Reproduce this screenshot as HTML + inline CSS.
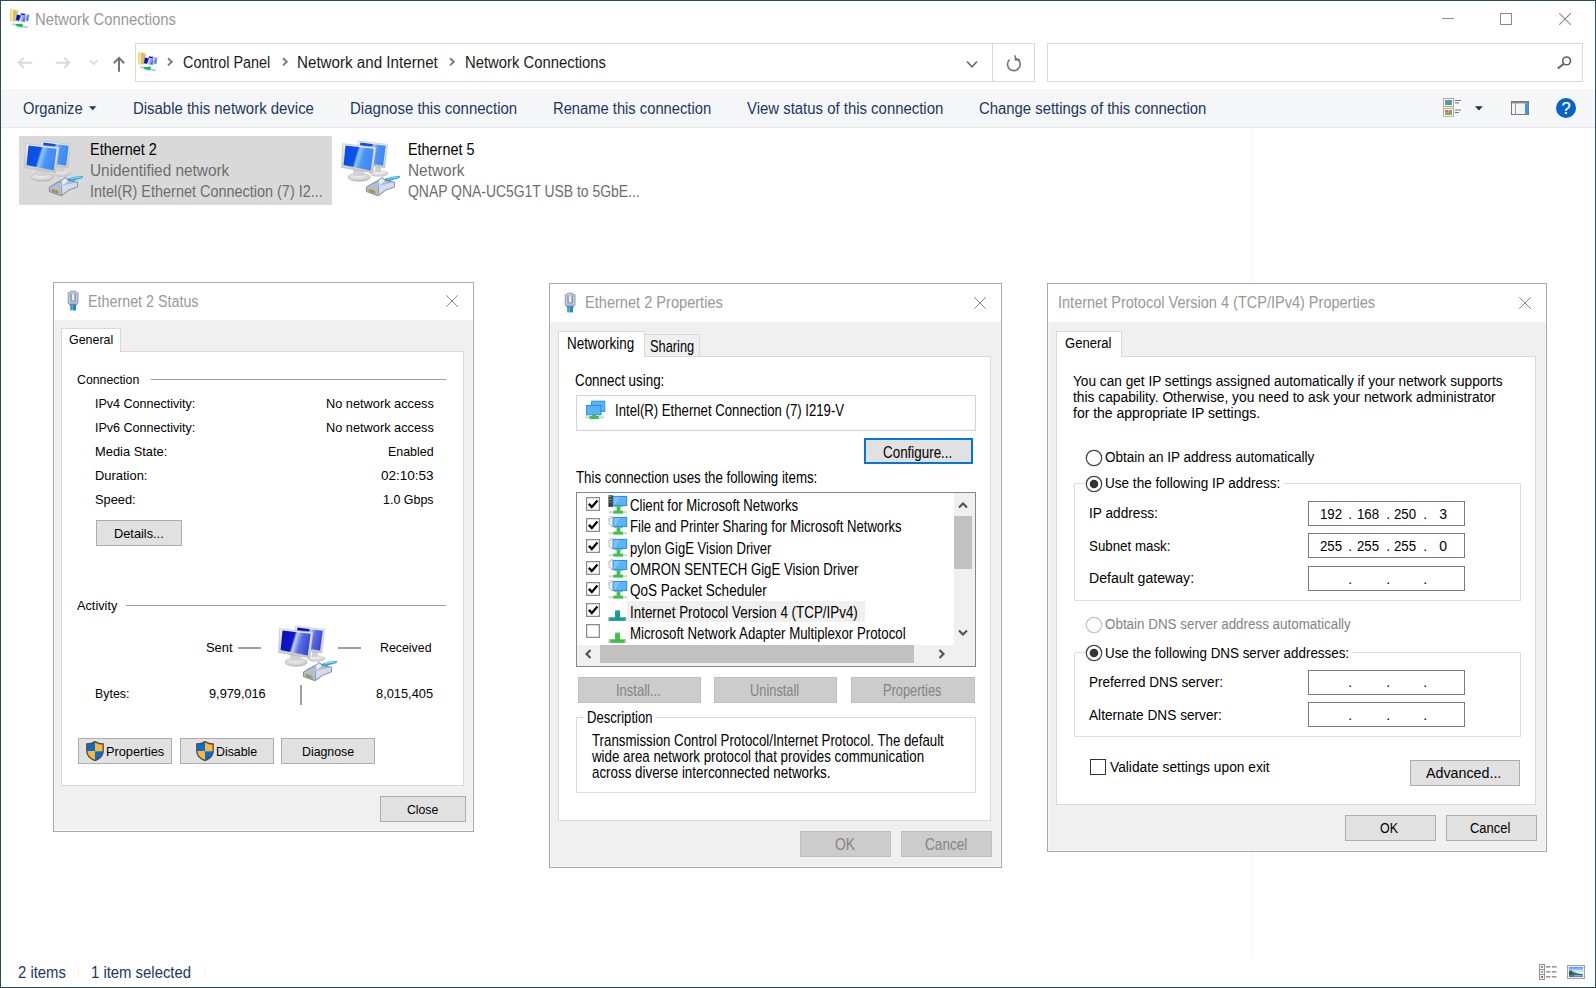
<!DOCTYPE html><html lang="en"><head><meta charset="utf-8"><title>Network Connections</title><style>

html,body{margin:0;padding:0}
body{width:1596px;height:988px;position:relative;overflow:hidden;background:#fff;font-family:"Liberation Sans",sans-serif}
body div,body span,body svg{position:absolute;box-sizing:border-box}
span{white-space:nowrap;transform-origin:0 0;line-height:1}

</style></head><body>
<div style="left:1px;top:89px;width:1594px;height:39px;background:#f5f6f7;border-bottom:1px solid #e9eaeb"></div>
<div style="left:135px;top:43px;width:900px;height:39px;border:1px solid #d9d9d9;background:#fff"></div>
<div style="left:992px;top:44px;width:1px;height:37px;background:#d9d9d9"></div>
<div style="left:1047px;top:43px;width:536px;height:39px;border:1px solid #d9d9d9;background:#fff"></div>
<div style="left:1251px;top:128px;width:1px;height:830px;background:#f5f5f5"></div>
<span style="left:35.20px;top:12.00px;font-size:16px;color:#999;transform:scaleX(0.9265);">Network Connections</span>
<span style="left:182.90px;top:55.00px;font-size:16px;color:#1b1b1b;transform:scaleX(0.8994);">Control Panel</span>
<span style="left:297.40px;top:55.00px;font-size:16px;color:#1b1b1b;transform:scaleX(0.9479);">Network and Internet</span>
<span style="left:465.10px;top:55.00px;font-size:16px;color:#1b1b1b;transform:scaleX(0.9272);">Network Connections</span>
<span style="left:22.70px;top:101.00px;font-size:16px;color:#1d3763;transform:scaleX(0.9180);">Organize</span>
<span style="left:133.00px;top:101.00px;font-size:16px;color:#1d3763;transform:scaleX(0.9331);">Disable this network device</span>
<span style="left:349.70px;top:101.00px;font-size:16px;color:#1d3763;transform:scaleX(0.9352);">Diagnose this connection</span>
<span style="left:552.80px;top:101.00px;font-size:16px;color:#1d3763;transform:scaleX(0.9210);">Rename this connection</span>
<span style="left:746.80px;top:101.00px;font-size:16px;color:#1d3763;transform:scaleX(0.9325);">View status of this connection</span>
<span style="left:978.50px;top:101.00px;font-size:16px;color:#1d3763;transform:scaleX(0.9296);">Change settings of this connection</span>
<div style="left:19px;top:136px;width:313px;height:69px;background:#d9d9d9"></div>
<span style="left:90.00px;top:142.00px;font-size:16px;color:#000;transform:scaleX(0.9062);">Ethernet 2</span>
<span style="left:90.00px;top:163.00px;font-size:16px;color:#6d6d6d;transform:scaleX(0.9609);">Unidentified network</span>
<span style="left:90.00px;top:184.00px;font-size:16px;color:#6d6d6d;transform:scaleX(0.9027);">Intel(R) Ethernet Connection (7) I2...</span>
<span style="left:408.00px;top:142.00px;font-size:16px;color:#000;transform:scaleX(0.8994);">Ethernet 5</span>
<span style="left:408.00px;top:163.00px;font-size:16px;color:#6d6d6d;transform:scaleX(0.9627);">Network</span>
<span style="left:408.00px;top:184.00px;font-size:16px;color:#6d6d6d;transform:scaleX(0.8705);">QNAP QNA-UC5G1T USB to 5GbE...</span>
<span style="left:17.90px;top:965.00px;font-size:16px;color:#1d3763;transform:scaleX(0.9287);">2 items</span>
<span style="left:91.10px;top:965.00px;font-size:16px;color:#1d3763;transform:scaleX(0.9293);">1 item selected</span>
<div style="left:78px;top:966px;width:1px;height:13px;background:#f3f3f3"></div>
<div style="left:204px;top:966px;width:1px;height:13px;background:#f3f3f3"></div>
<svg style="left:8px;top:8px" width="24" height="22" viewBox="0 0 24 22"><defs><linearGradient id="g1" x1="0" y1="0" x2="1" y2="0.3"><stop offset="0" stop-color="#0606b4"/><stop offset="0.5" stop-color="#1014c6"/><stop offset="0.6" stop-color="#dfe5fa"/><stop offset="1" stop-color="#4060dc"/></linearGradient>
<linearGradient id="g2" x1="0" y1="0" x2="1" y2="0"><stop offset="0" stop-color="#ecd27a"/><stop offset="0.3" stop-color="#f7e7a6"/><stop offset="0.5" stop-color="#d9b84e"/><stop offset="1" stop-color="#e6ca6c"/></linearGradient></defs>
<path d="M2 1 L5.4 1.6 L10 2.8 L10 13 L3.2 13.8 L2 13 Z" fill="url(#g2)"/>
<path d="M12.8 5 L21.3 6.6 L20.5 13.2 L12 12 Z" fill="url(#g1)" stroke="#dcdce4" stroke-width="0.6"/>
<path d="M8.4 6.2 L17.4 8.1 L17 14.2 L7.6 12.6 Z" fill="url(#g1)" stroke="#e4e4ea" stroke-width="0.6"/>
<path d="M5 16.2 L19 19.4" stroke="#bcc6c6" stroke-width="1.8" stroke-linecap="round"/>
<path d="M7.9 16 L14.9 15.8 L14.3 19.4 L8.2 18 Z" fill="#0bc656"/>
<path d="M12.5 14 L14 14.2 L13.6 16 L12.4 16 Z" fill="#d8d8dc"/></svg>
<svg style="left:136px;top:51px" width="24" height="22" viewBox="0 0 24 22"><defs><linearGradient id="g3" x1="0" y1="0" x2="1" y2="0.3"><stop offset="0" stop-color="#0606b4"/><stop offset="0.5" stop-color="#1014c6"/><stop offset="0.6" stop-color="#dfe5fa"/><stop offset="1" stop-color="#4060dc"/></linearGradient>
<linearGradient id="g4" x1="0" y1="0" x2="1" y2="0"><stop offset="0" stop-color="#ecd27a"/><stop offset="0.3" stop-color="#f7e7a6"/><stop offset="0.5" stop-color="#d9b84e"/><stop offset="1" stop-color="#e6ca6c"/></linearGradient></defs>
<path d="M2 1 L5.4 1.6 L10 2.8 L10 13 L3.2 13.8 L2 13 Z" fill="url(#g4)"/>
<path d="M12.8 5 L21.3 6.6 L20.5 13.2 L12 12 Z" fill="url(#g3)" stroke="#dcdce4" stroke-width="0.6"/>
<path d="M8.4 6.2 L17.4 8.1 L17 14.2 L7.6 12.6 Z" fill="url(#g3)" stroke="#e4e4ea" stroke-width="0.6"/>
<path d="M5 16.2 L19 19.4" stroke="#bcc6c6" stroke-width="1.8" stroke-linecap="round"/>
<path d="M7.9 16 L14.9 15.8 L14.3 19.4 L8.2 18 Z" fill="#0bc656"/>
<path d="M12.5 14 L14 14.2 L13.6 16 L12.4 16 Z" fill="#d8d8dc"/></svg>
<div style="left:1442px;top:18px;width:12px;height:1px;background:#8a8a8a"></div>
<div style="left:1500px;top:13px;width:12px;height:12px;border:1px solid #8a8a8a"></div>
<svg style="left:1559px;top:13px" width="12" height="12" viewBox="0 0 12 12"><path d="M0.3 0.3 L11.7 11.7 M11.7 0.3 L0.3 11.7" stroke="#8a8a8a" stroke-width="1.1" fill="none"/></svg>
<svg style="left:17px;top:55px" width="16" height="15" viewBox="0 0 16 15"><path d="M15.2 7.7 L1.8 7.7 M6.8 2.6 L1.7 7.7 L6.8 12.8" stroke="#d9d9d9" stroke-width="1.9" fill="none"/></svg>
<svg style="left:55px;top:55px" width="16" height="15" viewBox="0 0 16 15"><path d="M0.8 7.7 L14.2 7.7 M9.2 2.6 L14.3 7.7 L9.2 12.8" stroke="#d9d9d9" stroke-width="1.9" fill="none"/></svg>
<svg style="left:89px;top:59px" width="10" height="7" viewBox="0 0 10 7"><path d="M1 1.4 L4.8 5.2 L8.6 1.4" stroke="#dedede" stroke-width="1.8" fill="none"/></svg>
<svg style="left:112px;top:56px" width="14" height="17" viewBox="0 0 14 17"><path d="M7 15.8 L7 2 M1.8 7.2 L7 1.9 L12.2 7.2" stroke="#747474" stroke-width="2" fill="none"/></svg>
<svg style="left:167.0px;top:57px" width="7" height="10" viewBox="0 0 7 10"><path d="M1 1.2 L4.8 4.8 L1 8.4" stroke="#7a7a7a" stroke-width="1.9" fill="none"/></svg>
<svg style="left:281.5px;top:57px" width="7" height="10" viewBox="0 0 7 10"><path d="M1 1.2 L4.8 4.8 L1 8.4" stroke="#7a7a7a" stroke-width="1.9" fill="none"/></svg>
<svg style="left:448.5px;top:57px" width="7" height="10" viewBox="0 0 7 10"><path d="M1 1.2 L4.8 4.8 L1 8.4" stroke="#7a7a7a" stroke-width="1.9" fill="none"/></svg>
<svg style="left:966px;top:59.5px" width="12" height="9" viewBox="0 0 12 9"><path d="M1 1.5 L6 6.8 L11 1.5" stroke="#6a6a6a" stroke-width="1.7" fill="none"/></svg>
<svg style="left:1006px;top:54.5px" width="16" height="17" viewBox="0 0 16 17"><path d="M9.4 3.2 A6.3 6.3 0 1 1 3.6 4.6" stroke="#757575" stroke-width="1.6" fill="none"/><path d="M9.6 0.2 L9.6 5 L14 5" stroke="#757575" stroke-width="1.5" fill="none" transform="rotate(-8 9.6 5)"/></svg>
<svg style="left:1557px;top:56px" width="15" height="14" viewBox="0 0 15 14"><circle cx="9.6" cy="4.9" r="3.9" stroke="#606060" stroke-width="1.6" fill="none"/><path d="M6.8 7.8 L0.8 12.6" stroke="#606060" stroke-width="1.9"/></svg>
<svg style="left:89px;top:106px" width="8" height="5" viewBox="0 0 8 5"><path d="M0 0.3 L7.4 0.3 L3.7 4.3 Z" fill="#1e395b"/></svg>
<svg style="left:1443px;top:98px" width="19" height="19" viewBox="0 0 19 19"><rect x="0.5" y="0.5" width="10" height="8" fill="#fff" stroke="#a8a8a8"/><rect x="2" y="2" width="7" height="5" fill="#4c96d8"/><path d="M2 6 L5 4 L9 5.6 L9 7 L2 7 Z" fill="#6a9a5c"/>
<rect x="0.5" y="10.3" width="10" height="8" fill="#fff" stroke="#a8a8a8"/><rect x="2" y="11.8" width="7" height="5" fill="#d8c24c"/><rect x="2" y="12" width="3" height="2.5" fill="#e0702c"/><rect x="6" y="12" width="3" height="3" fill="#8a8ae0"/><rect x="2" y="15" width="7" height="1.8" fill="#70b040"/>
<rect x="12" y="2" width="6" height="1" fill="#777"/><rect x="12" y="4.4" width="4" height="1" fill="#777"/><rect x="12" y="11.6" width="6" height="1" fill="#777"/><rect x="12" y="14" width="4" height="1" fill="#777"/></svg>
<svg style="left:1474.5px;top:105.5px" width="8" height="5" viewBox="0 0 8 5"><path d="M0 0.2 L7.8 0.2 L3.9 4.6 Z" fill="#1e2f4f"/></svg>
<svg style="left:1511px;top:101px" width="18" height="14" viewBox="0 0 18 14"><rect x="0.5" y="0.5" width="17" height="13" fill="#f4f4f4" stroke="#7b7b7b"/><rect x="1" y="1" width="16" height="1.4" fill="#8a8a8a"/><rect x="4" y="2" width="1" height="11.5" fill="#9a9a9a"/><rect x="14" y="2.2" width="3" height="11" fill="#3a96e8"/></svg>
<div style="left:1556px;top:98px;width:20px;height:20px;border-radius:50%;background:#0a63c2"></div>
<span style="left:1561.51px;top:100.00px;font-size:16.5px;color:#fff;-webkit-text-stroke:0.2px #fff;transform:scaleX(1.0000);">?</span>
<svg style="left:1539px;top:964px" width="19" height="16" viewBox="0 0 19 16"><rect x="0.55" y="0.55" width="4.9" height="15" fill="#fff" stroke="#929292" stroke-width="1.1"/><rect x="0.5" y="5.1" width="5" height="1" fill="#929292"/><rect x="0.5" y="10.1" width="5" height="1" fill="#929292"/>
<rect x="2.2" y="2.2" width="1.7" height="1.6" fill="#2c6a8c"/><rect x="2.2" y="2" width="1.7" height="0.8" fill="#4a9ae8"/>
<rect x="2.2" y="7.1" width="1.7" height="1.8" fill="#c87838"/><rect x="2.9" y="7" width="1" height="1" fill="#4a8ae0"/>
<rect x="2.2" y="12" width="1.7" height="1.8" fill="#c8201c"/>
<rect x="7" y="2.3" width="4.6" height="1.1" fill="#6c6c6c"/><rect x="13" y="2.3" width="4.6" height="1.1" fill="#6c6c6c"/>
<rect x="7" y="7.3" width="4.6" height="1.1" fill="#6c6c6c"/><rect x="13" y="7.3" width="4.6" height="1.1" fill="#6c6c6c"/>
<rect x="7" y="12.3" width="4.6" height="1.1" fill="#6c6c6c"/><rect x="13" y="12.3" width="4.6" height="1.1" fill="#6c6c6c"/></svg>
<svg style="left:1567px;top:965px" width="18" height="14" viewBox="0 0 18 14"><defs><linearGradient id="g5" x1="0" y1="0" x2="0" y2="1"><stop offset="0" stop-color="#4e90f6"/><stop offset="0.35" stop-color="#b9dcff"/><stop offset="0.6" stop-color="#e2f3ff"/><stop offset="1" stop-color="#dcecf8"/></linearGradient></defs><rect x="0.6" y="0.6" width="16.8" height="12.8" fill="#fff" stroke="#a2a2a2" stroke-width="1.2"/><rect x="2" y="2" width="14" height="10" fill="url(#g5)"/><path d="M2 5.6 L4.4 5.6 L7 7.2 L11 8.4 L16 9.2 L16 10.4 L2 10.4 Z" fill="#3f7052"/><path d="M2 7.5 L4 7.2 L6 9 L2 9.6 Z" fill="#2a5440"/><rect x="2" y="10.2" width="14" height="1.8" fill="#3f74b8"/><rect x="7" y="10.4" width="9" height="0.9" fill="#9fc0e2"/></svg>
<svg style="left:18px;top:134px" width="80" height="70" viewBox="0 0 80 70"><defs>
<linearGradient id="g6" x1="0" y1="0.2" x2="1" y2="0.45"><stop offset="0" stop-color="#0a4ce2"/><stop offset="0.42" stop-color="#0a54ea"/><stop offset="0.5" stop-color="#92c4ff"/><stop offset="0.68" stop-color="#4a94f8"/><stop offset="1" stop-color="#3c88f5"/></linearGradient>
<linearGradient id="g7" x1="0" y1="0" x2="0" y2="1"><stop offset="0" stop-color="#f1f1ef"/><stop offset="1" stop-color="#c6c6c2"/></linearGradient>
<radialGradient id="g8" cx="0.45" cy="0.3" r="0.8"><stop offset="0" stop-color="#f0f0f0"/><stop offset="0.6" stop-color="#d6d6d6"/><stop offset="1" stop-color="#a4a4a4"/></radialGradient>
</defs>
<ellipse cx="44" cy="39.3" rx="9.5" ry="3.3" fill="url(#g8)" opacity="0.9"/>
<path d="M40 32 L46 33 L46 38 L40 38 Z" fill="#d0d0d0"/>
<path d="M23.4 6.9 L52.6 10.4 L49.8 34 L21.6 29.6 Z" fill="url(#g7)" stroke="#bdbdb8" stroke-width="0.6"/>
<path d="M25.4 8.6 L50.8 11.7 L48 31.6 L23.8 27.9 Z" fill="url(#g6)"/>
<ellipse cx="24.2" cy="43.2" rx="11.2" ry="4.1" fill="url(#g8)" stroke="#b4b4b4" stroke-width="0.6"/>
<path d="M17.5 35 L29 37 L28.5 42 L19 42 Z" fill="#d2d2d2"/>
<path d="M7.6 9.7 L40.9 13.3 L37.8 38.9 L6.5 33.5 Z" fill="url(#g7)" stroke="#b9b9b4" stroke-width="0.6"/>
<path d="M10.5 11.5 L38.7 14.7 L35.7 36.4 L8.6 31.1 Z" fill="url(#g6)"/>
<path d="M49.6 44.8 Q57 42.4 64.8 41.8 Q65.6 43 64 44.2 Q57 45.5 51.5 48.2 Z" fill="#2aa7e0"/>
<path d="M53 45 Q58 43.4 63 43" stroke="#9fe0f8" stroke-width="0.9" fill="none" stroke-linecap="round"/>
<path d="M31.4 53 L43.5 46.3 L47.5 43.5 L50.5 46.6 L59.4 48.2 L59.4 53 L51 56 L43.6 61.6 L41 61 L31.4 57.6 Z" fill="#b2bfd3" stroke="#70809c" stroke-width="0.9" stroke-linejoin="round"/>
<path d="M43.2 52 L59 48.6 L59 52.6 L50.8 55.6 L43.6 60.6 Z" fill="#d3dceb"/><path d="M43.4 51.8 L43.6 61.2" stroke="#7a8aa6" stroke-width="0.7"/><path d="M35 50.8 L46.5 44.4 M38.5 49 L48.6 45.6" stroke="#8a9ab4" stroke-width="0.6"/>
<path d="M43.5 46.8 L47.4 44.2 L49.8 47 L45 51 Z" fill="#e6edf6"/>
<path d="M33.3 54.6 L40.8 57 L40.8 60 L33.3 57.4 Z" fill="#b9a84e"/><path d="M35 55.2 L35 58 M36.8 55.8 L36.8 58.6 M38.6 56.4 L38.6 59.2" stroke="#7d7440" stroke-width="0.6"/>
</svg>
<svg style="left:335.4px;top:134px" width="80" height="70" viewBox="0 0 80 70"><defs>
<linearGradient id="g9" x1="0" y1="0.2" x2="1" y2="0.45"><stop offset="0" stop-color="#0a4ce2"/><stop offset="0.42" stop-color="#0a54ea"/><stop offset="0.5" stop-color="#92c4ff"/><stop offset="0.68" stop-color="#4a94f8"/><stop offset="1" stop-color="#3c88f5"/></linearGradient>
<linearGradient id="g10" x1="0" y1="0" x2="0" y2="1"><stop offset="0" stop-color="#f1f1ef"/><stop offset="1" stop-color="#c6c6c2"/></linearGradient>
<radialGradient id="g11" cx="0.45" cy="0.3" r="0.8"><stop offset="0" stop-color="#f0f0f0"/><stop offset="0.6" stop-color="#d6d6d6"/><stop offset="1" stop-color="#a4a4a4"/></radialGradient>
</defs>
<ellipse cx="44" cy="39.3" rx="9.5" ry="3.3" fill="url(#g11)" opacity="0.9"/>
<path d="M40 32 L46 33 L46 38 L40 38 Z" fill="#d0d0d0"/>
<path d="M23.4 6.9 L52.6 10.4 L49.8 34 L21.6 29.6 Z" fill="url(#g10)" stroke="#bdbdb8" stroke-width="0.6"/>
<path d="M25.4 8.6 L50.8 11.7 L48 31.6 L23.8 27.9 Z" fill="url(#g9)"/>
<ellipse cx="24.2" cy="43.2" rx="11.2" ry="4.1" fill="url(#g11)" stroke="#b4b4b4" stroke-width="0.6"/>
<path d="M17.5 35 L29 37 L28.5 42 L19 42 Z" fill="#d2d2d2"/>
<path d="M7.6 9.7 L40.9 13.3 L37.8 38.9 L6.5 33.5 Z" fill="url(#g10)" stroke="#b9b9b4" stroke-width="0.6"/>
<path d="M10.5 11.5 L38.7 14.7 L35.7 36.4 L8.6 31.1 Z" fill="url(#g9)"/>
<path d="M49.6 44.8 Q57 42.4 64.8 41.8 Q65.6 43 64 44.2 Q57 45.5 51.5 48.2 Z" fill="#2aa7e0"/>
<path d="M53 45 Q58 43.4 63 43" stroke="#9fe0f8" stroke-width="0.9" fill="none" stroke-linecap="round"/>
<path d="M31.4 53 L43.5 46.3 L47.5 43.5 L50.5 46.6 L59.4 48.2 L59.4 53 L51 56 L43.6 61.6 L41 61 L31.4 57.6 Z" fill="#b2bfd3" stroke="#70809c" stroke-width="0.9" stroke-linejoin="round"/>
<path d="M43.2 52 L59 48.6 L59 52.6 L50.8 55.6 L43.6 60.6 Z" fill="#d3dceb"/><path d="M43.4 51.8 L43.6 61.2" stroke="#7a8aa6" stroke-width="0.7"/><path d="M35 50.8 L46.5 44.4 M38.5 49 L48.6 45.6" stroke="#8a9ab4" stroke-width="0.6"/>
<path d="M43.5 46.8 L47.4 44.2 L49.8 47 L45 51 Z" fill="#e6edf6"/>
<path d="M33.3 54.6 L40.8 57 L40.8 60 L33.3 57.4 Z" fill="#b9a84e"/><path d="M35 55.2 L35 58 M36.8 55.8 L36.8 58.6 M38.6 56.4 L38.6 59.2" stroke="#7d7440" stroke-width="0.6"/>
</svg>
<div style="left:53px;top:282px;width:421px;height:550px;background:#f0f0f0;border:1px solid #a9a9a9;box-shadow:inset 0 0 0 1px #f6f6f6"></div>
<div style="left:54px;top:283px;width:419px;height:37px;background:#fff"></div>
<svg style="left:67px;top:290.4px" width="12" height="21" viewBox="0 0 12 21"><defs><linearGradient id="g12" x1="0" y1="0" x2="1" y2="0"><stop offset="0" stop-color="#1583ba"/><stop offset="0.4" stop-color="#56bce4"/><stop offset="0.55" stop-color="#1890c8"/><stop offset="1" stop-color="#0f7fb4"/></linearGradient></defs>
<rect x="3.3" y="14.6" width="5.6" height="5.8" fill="url(#g12)"/>
<path d="M1.2 2.8 L2.9 2.8 L3.5 1.2 L8.7 1.2 L9.3 2.8 L11 2.8 L11 13.2 L9.5 14.7 L2.7 14.7 L1.2 13.2 Z" fill="#c3cddd" stroke="#8595ae" stroke-width="0.9" stroke-linejoin="round"/>
<rect x="2.4" y="12.2" width="7.4" height="1.9" fill="#a2b6d3"/>
<path d="M3.9 3.6 L3.9 11 L8.3 11 L8.3 3.6" fill="#adb9cc" stroke="#7787a2" stroke-width="0.9"/>
<rect x="5.1" y="4.2" width="2" height="6.1" fill="#eef1f8"/>
<rect x="2.4" y="14.4" width="7.4" height="0.8" fill="#5e6f8e"/>
</svg>
<span style="left:88.30px;top:294.00px;font-size:16px;color:#999;transform:scaleX(0.8937);">Ethernet 2 Status</span>
<svg style="left:446px;top:295px" width="12" height="12" viewBox="0 0 12 12"><path d="M0.3 0.3 L11.7 11.7 M11.7 0.3 L0.3 11.7" stroke="#858585" stroke-width="1" fill="none"/></svg>
<div style="left:61px;top:351px;width:403px;height:435px;background:#fff;border:1px solid #d9d9d9"></div>
<div style="left:61px;top:328px;width:60px;height:24px;background:#fff;border:1px solid #d9d9d9;border-bottom:none"></div>
<span style="left:68.80px;top:333.00px;font-size:13.5px;color:#000;transform:scaleX(0.9223);">General</span>
<span style="left:77.00px;top:373.00px;font-size:13.5px;color:#000;transform:scaleX(0.9120);">Connection</span>
<div style="left:151px;top:379px;width:295px;height:1px;background:#a0a0a0"></div>
<span style="left:94.80px;top:397.00px;font-size:13.5px;color:#000;transform:scaleX(0.9283);">IPv4 Connectivity:</span>
<span style="left:325.60px;top:397.00px;font-size:13.5px;color:#000;transform:scaleX(0.9452);">No network access</span>
<span style="left:94.80px;top:421.00px;font-size:13.5px;color:#000;transform:scaleX(0.9283);">IPv6 Connectivity:</span>
<span style="left:325.60px;top:421.00px;font-size:13.5px;color:#000;transform:scaleX(0.9452);">No network access</span>
<span style="left:94.80px;top:445.00px;font-size:13.5px;color:#000;transform:scaleX(0.9539);">Media State:</span>
<span style="left:387.80px;top:445.00px;font-size:13.5px;color:#000;transform:scaleX(0.9203);">Enabled</span>
<span style="left:94.80px;top:469.00px;font-size:13.5px;color:#000;transform:scaleX(0.9565);">Duration:</span>
<span style="left:380.80px;top:469.00px;font-size:13.5px;color:#000;transform:scaleX(1.0007);">02:10:53</span>
<span style="left:94.80px;top:493.00px;font-size:13.5px;color:#000;transform:scaleX(0.9510);">Speed:</span>
<span style="left:382.80px;top:493.00px;font-size:13.5px;color:#000;transform:scaleX(0.9234);">1.0 Gbps</span>
<div style="left:96px;top:520px;width:86px;height:26px;background:#e1e1e1;border:1px solid #adadad"></div>
<span style="left:113.70px;top:527.00px;font-size:13.5px;color:#000;transform:scaleX(0.9461);">Details...</span>
<span style="left:76.70px;top:599.00px;font-size:13.5px;color:#000;transform:scaleX(0.9423);">Activity</span>
<div style="left:126px;top:605px;width:320px;height:1px;background:#a0a0a0"></div>
<span style="left:205.80px;top:641.00px;font-size:13.5px;color:#000;transform:scaleX(0.9575);">Sent</span>
<div style="left:238px;top:647px;width:23px;height:1px;background:#999"></div>
<div style="left:238px;top:647px;width:23px;height:2px;background:#a0a0a0"></div>
<div style="left:338px;top:647px;width:23px;height:2px;background:#a0a0a0"></div>
<span style="left:379.90px;top:641.00px;font-size:13.5px;color:#000;transform:scaleX(0.9150);">Received</span>
<svg style="left:271.6px;top:618.8px" width="80" height="70" viewBox="0 0 80 70"><defs>
<linearGradient id="g13" x1="0" y1="0.2" x2="1" y2="0.45"><stop offset="0" stop-color="#0a10c0"/><stop offset="0.42" stop-color="#0c18c8"/><stop offset="0.5" stop-color="#c4d0fa"/><stop offset="0.68" stop-color="#5a70e4"/><stop offset="1" stop-color="#3346d6"/></linearGradient>
<linearGradient id="g14" x1="0" y1="0" x2="0" y2="1"><stop offset="0" stop-color="#f1f1ef"/><stop offset="1" stop-color="#c6c6c2"/></linearGradient>
<radialGradient id="g15" cx="0.45" cy="0.3" r="0.8"><stop offset="0" stop-color="#f0f0f0"/><stop offset="0.6" stop-color="#d6d6d6"/><stop offset="1" stop-color="#a4a4a4"/></radialGradient>
</defs>
<ellipse cx="44" cy="39.3" rx="9.5" ry="3.3" fill="url(#g15)" opacity="0.9"/>
<path d="M40 32 L46 33 L46 38 L40 38 Z" fill="#d0d0d0"/>
<path d="M23.4 6.9 L52.6 10.4 L49.8 34 L21.6 29.6 Z" fill="url(#g14)" stroke="#bdbdb8" stroke-width="0.6"/>
<path d="M25.4 8.6 L50.8 11.7 L48 31.6 L23.8 27.9 Z" fill="url(#g13)"/>
<ellipse cx="24.2" cy="43.2" rx="11.2" ry="4.1" fill="url(#g15)" stroke="#b4b4b4" stroke-width="0.6"/>
<path d="M17.5 35 L29 37 L28.5 42 L19 42 Z" fill="#d2d2d2"/>
<path d="M7.6 9.7 L40.9 13.3 L37.8 38.9 L6.5 33.5 Z" fill="url(#g14)" stroke="#b9b9b4" stroke-width="0.6"/>
<path d="M10.5 11.5 L38.7 14.7 L35.7 36.4 L8.6 31.1 Z" fill="url(#g13)"/>
<path d="M49.6 44.8 Q57 42.4 64.8 41.8 Q65.6 43 64 44.2 Q57 45.5 51.5 48.2 Z" fill="#2aa7e0"/>
<path d="M53 45 Q58 43.4 63 43" stroke="#9fe0f8" stroke-width="0.9" fill="none" stroke-linecap="round"/>
<path d="M31.4 53 L43.5 46.3 L47.5 43.5 L50.5 46.6 L59.4 48.2 L59.4 53 L51 56 L43.6 61.6 L41 61 L31.4 57.6 Z" fill="#b2bfd3" stroke="#70809c" stroke-width="0.9" stroke-linejoin="round"/>
<path d="M43.2 52 L59 48.6 L59 52.6 L50.8 55.6 L43.6 60.6 Z" fill="#d3dceb"/><path d="M43.4 51.8 L43.6 61.2" stroke="#7a8aa6" stroke-width="0.7"/><path d="M35 50.8 L46.5 44.4 M38.5 49 L48.6 45.6" stroke="#8a9ab4" stroke-width="0.6"/>
<path d="M43.5 46.8 L47.4 44.2 L49.8 47 L45 51 Z" fill="#e6edf6"/>
<path d="M33.3 54.6 L40.8 57 L40.8 60 L33.3 57.4 Z" fill="#b9a84e"/><path d="M35 55.2 L35 58 M36.8 55.8 L36.8 58.6 M38.6 56.4 L38.6 59.2" stroke="#7d7440" stroke-width="0.6"/>
</svg>
<span style="left:94.60px;top:687.00px;font-size:13.5px;color:#000;transform:scaleX(0.9170);">Bytes:</span>
<span style="left:208.80px;top:687.00px;font-size:13.5px;color:#000;transform:scaleX(0.9440);">9,979,016</span>
<div style="left:300px;top:685px;width:2px;height:20px;background:#a0a0a0"></div>
<span style="left:376.00px;top:687.00px;font-size:13.5px;color:#000;transform:scaleX(0.9507);">8,015,405</span>
<div style="left:78px;top:738px;width:94px;height:26px;background:#e1e1e1;border:1px solid #adadad"></div>
<svg style="left:85.5px;top:740.5px" width="18" height="20.4" viewBox="0 0 18 20.4"><path d="M9 0.6 C7 2 4 3 0.8 3 L0.8 10.2 L9 10.2 Z" fill="#0b6bd0"/>
<path d="M9 0.6 C11 2 14 3 17.2 3 L17.2 10.2 L9 10.2 Z" fill="#fdb92e"/>
<path d="M0.8 10.2 C0.9 14.5 4.5 17.8 9 19.7 L9 10.2 Z" fill="#fdb92e"/>
<path d="M17.2 10.2 C17.1 14.5 13.5 17.8 9 19.7 L9 10.2 Z" fill="#0b6bd0"/>
<path d="M9 0.6 C7 2 4 3 0.8 3 L0.8 10.2 C0.9 14.5 4.5 17.8 9 19.7 C13.5 17.8 17.1 14.5 17.2 10.2 L17.2 3 C14 3 11 2 9 0.6 Z" fill="none" stroke="#4c4c4c" stroke-width="1.3"/></svg>
<span style="left:106.10px;top:745.00px;font-size:13.5px;color:#000;transform:scaleX(0.9459);">Properties</span>
<div style="left:180px;top:738px;width:94px;height:26px;background:#e1e1e1;border:1px solid #adadad"></div>
<svg style="left:195.6px;top:740.5px" width="18" height="20.4" viewBox="0 0 18 20.4"><path d="M9 0.6 C7 2 4 3 0.8 3 L0.8 10.2 L9 10.2 Z" fill="#0b6bd0"/>
<path d="M9 0.6 C11 2 14 3 17.2 3 L17.2 10.2 L9 10.2 Z" fill="#fdb92e"/>
<path d="M0.8 10.2 C0.9 14.5 4.5 17.8 9 19.7 L9 10.2 Z" fill="#fdb92e"/>
<path d="M17.2 10.2 C17.1 14.5 13.5 17.8 9 19.7 L9 10.2 Z" fill="#0b6bd0"/>
<path d="M9 0.6 C7 2 4 3 0.8 3 L0.8 10.2 C0.9 14.5 4.5 17.8 9 19.7 C13.5 17.8 17.1 14.5 17.2 10.2 L17.2 3 C14 3 11 2 9 0.6 Z" fill="none" stroke="#4c4c4c" stroke-width="1.3"/></svg>
<span style="left:215.50px;top:745.00px;font-size:13.5px;color:#000;transform:scaleX(0.9149);">Disable</span>
<div style="left:281px;top:738px;width:94px;height:26px;background:#e1e1e1;border:1px solid #adadad"></div>
<span style="left:301.50px;top:745.00px;font-size:13.5px;color:#000;transform:scaleX(0.9133);">Diagnose</span>
<div style="left:380px;top:796px;width:86px;height:26px;background:#e1e1e1;border:1px solid #adadad"></div>
<span style="left:407.20px;top:803.00px;font-size:13.5px;color:#000;transform:scaleX(0.9068);">Close</span>
<div style="left:549px;top:283px;width:453px;height:585px;background:#f0f0f0;border:1px solid #a9a9a9;box-shadow:inset 0 0 0 1px #f6f6f6"></div>
<div style="left:550px;top:284px;width:451px;height:38px;background:#fff"></div>
<svg style="left:564px;top:292.4px" width="12" height="21" viewBox="0 0 12 21"><defs><linearGradient id="g16" x1="0" y1="0" x2="1" y2="0"><stop offset="0" stop-color="#1583ba"/><stop offset="0.4" stop-color="#56bce4"/><stop offset="0.55" stop-color="#1890c8"/><stop offset="1" stop-color="#0f7fb4"/></linearGradient></defs>
<rect x="3.3" y="14.6" width="5.6" height="5.8" fill="url(#g16)"/>
<path d="M1.2 2.8 L2.9 2.8 L3.5 1.2 L8.7 1.2 L9.3 2.8 L11 2.8 L11 13.2 L9.5 14.7 L2.7 14.7 L1.2 13.2 Z" fill="#c3cddd" stroke="#8595ae" stroke-width="0.9" stroke-linejoin="round"/>
<rect x="2.4" y="12.2" width="7.4" height="1.9" fill="#a2b6d3"/>
<path d="M3.9 3.6 L3.9 11 L8.3 11 L8.3 3.6" fill="#adb9cc" stroke="#7787a2" stroke-width="0.9"/>
<rect x="5.1" y="4.2" width="2" height="6.1" fill="#eef1f8"/>
<rect x="2.4" y="14.4" width="7.4" height="0.8" fill="#5e6f8e"/>
</svg>
<span style="left:585.10px;top:295.00px;font-size:16px;color:#999;transform:scaleX(0.9114);">Ethernet 2 Properties</span>
<svg style="left:974px;top:297px" width="12" height="12" viewBox="0 0 12 12"><path d="M0.3 0.3 L11.7 11.7 M11.7 0.3 L0.3 11.7" stroke="#858585" stroke-width="1" fill="none"/></svg>
<div style="left:558px;top:356px;width:433px;height:465px;background:#fff;border:1px solid #d9d9d9"></div>
<div style="left:644px;top:334px;width:56px;height:22px;background:#f0f0f0;border:1px solid #d9d9d9;border-bottom:none"></div>
<div style="left:558px;top:331px;width:87px;height:26px;background:#fff;border:1px solid #d9d9d9;border-bottom:none"></div>
<span style="left:567.20px;top:336.00px;font-size:15.7px;color:#000;transform:scaleX(0.8551);">Networking</span>
<span style="left:649.70px;top:339.00px;font-size:15.7px;color:#000;transform:scaleX(0.8173);">Sharing</span>
<span style="left:574.90px;top:373.00px;font-size:15.7px;color:#000;transform:scaleX(0.8533);">Connect using:</span>
<div style="left:576px;top:395px;width:400px;height:36px;background:#fff;border:1px solid #d4d4d4;box-shadow:inset 0 0 0 1px #fafafa"></div>
<svg style="left:585px;top:400px" width="21" height="20" viewBox="0 0 21 20"><rect x="6.6" y="1.2" width="13.2" height="10.2" fill="#5cb4f4" stroke="#2f8fdc" stroke-width="1"/>
<rect x="1.6" y="5.4" width="14.4" height="9.4" fill="#59b2f6" stroke="#2a8ad8" stroke-width="1"/>
<rect x="0" y="16.4" width="19" height="2" fill="#d4d4d4"/>
<rect x="7.4" y="14.8" width="3.4" height="2.4" fill="#3cb44a"/>
<rect x="4.6" y="16" width="9.2" height="3" fill="#3fbf4c"/></svg>
<span style="left:615.20px;top:403.00px;font-size:15.7px;color:#000;transform:scaleX(0.8394);">Intel(R) Ethernet Connection (7) I219-V</span>
<div style="left:863.6px;top:438.1px;width:109.79999999999995px;height:26.299999999999955px;background:#e1e1e1;border:2px solid #0078d7"></div>
<span style="left:883.10px;top:445.00px;font-size:15.7px;color:#000;transform:scaleX(0.8544);">Configure...</span>
<span style="left:575.80px;top:470.00px;font-size:15.7px;color:#000;transform:scaleX(0.8462);">This connection uses the following items:</span>
<div style="left:576px;top:492px;width:400px;height:175px;background:#fff;border:1px solid #828790"></div>
<svg style="left:586px;top:497px" width="14" height="14" viewBox="0 0 14 14"><rect x="0.5" y="0.5" width="13" height="13" fill="#fff" stroke="#8c8c8c" stroke-width="1.5"/><path d="M2.91 6.89 L5.82 10.12 L11.42 3.45" fill="none" stroke="#000" stroke-width="2.3"/></svg>
<svg style="left:608px;top:495px" width="20" height="20" viewBox="0 0 20 20"><rect x="0.7" y="16.2" width="18.6" height="2.2" fill="#d6d6d6"/>
<rect x="8.6" y="10.8" width="3.8" height="6" fill="#44c24e"/>
<rect x="5.4" y="15.6" width="9.6" height="3" fill="#42c04c"/>
<rect x="6" y="11.2" width="9" height="0.9" fill="#6aa9d8"/><rect x="0.4" y="0.3" width="4.6" height="11.6" fill="#3d3d3d"/><rect x="1.2" y="1" width="1.6" height="1.4" fill="#35e04a"/><rect x="1" y="4" width="3" height="1" fill="#8a8a8a"/><rect x="1" y="6.5" width="3" height="1" fill="#777"/><rect x="5.1" y="1.4" width="13.6" height="9" fill="#5ab5f7" stroke="#2a8ad6" stroke-width="1"/><path d="M5.6 1.9 L12 1.9 L7 9.9 L5.6 9.9 Z" fill="#86ccfb" opacity="0.7"/></svg>
<span style="left:629.80px;top:498.00px;font-size:15.7px;color:#000;transform:scaleX(0.8389);">Client for Microsoft Networks</span>
<svg style="left:586px;top:518px" width="14" height="14" viewBox="0 0 14 14"><rect x="0.5" y="0.5" width="13" height="13" fill="#fff" stroke="#8c8c8c" stroke-width="1.5"/><path d="M2.91 6.89 L5.82 10.12 L11.42 3.45" fill="none" stroke="#000" stroke-width="2.3"/></svg>
<svg style="left:608px;top:516px" width="20" height="20" viewBox="0 0 20 20"><rect x="0.7" y="16.2" width="18.6" height="2.2" fill="#d6d6d6"/>
<rect x="8.6" y="10.8" width="3.8" height="6" fill="#44c24e"/>
<rect x="5.4" y="15.6" width="9.6" height="3" fill="#42c04c"/>
<rect x="6" y="11.2" width="9" height="0.9" fill="#6aa9d8"/><path d="M4.8 0.6 L2.6 0.9 L2.4 2.6 L0.6 2.8 L0.6 5 L2 5.6 L0.4 7.2 L1.6 9 L3 8.8 L3.4 10.8 L5 10.8" fill="#eef1f4" stroke="#b4bcc6" stroke-width="0.9"/><rect x="5.1" y="1.4" width="13.6" height="9" fill="#5ab5f7" stroke="#2a8ad6" stroke-width="1"/><path d="M5.6 1.9 L12 1.9 L7 9.9 L5.6 9.9 Z" fill="#86ccfb" opacity="0.7"/></svg>
<span style="left:629.80px;top:519.00px;font-size:15.7px;color:#000;transform:scaleX(0.8352);">File and Printer Sharing for Microsoft Networks</span>
<svg style="left:586px;top:539px" width="14" height="14" viewBox="0 0 14 14"><rect x="0.5" y="0.5" width="13" height="13" fill="#fff" stroke="#8c8c8c" stroke-width="1.5"/><path d="M2.91 6.89 L5.82 10.12 L11.42 3.45" fill="none" stroke="#000" stroke-width="2.3"/></svg>
<svg style="left:608px;top:538px" width="20" height="20" viewBox="0 0 20 20"><rect x="0.7" y="16.2" width="18.6" height="2.2" fill="#d6d6d6"/>
<rect x="8.6" y="10.8" width="3.8" height="6" fill="#44c24e"/>
<rect x="5.4" y="15.6" width="9.6" height="3" fill="#42c04c"/>
<rect x="6" y="11.2" width="9" height="0.9" fill="#6aa9d8"/><path d="M4.8 0.6 L2.6 0.9 L2.4 2.6 L0.6 2.8 L0.6 5 L2 5.6 L0.4 7.2 L1.6 9 L3 8.8 L3.4 10.8 L5 10.8" fill="#eef1f4" stroke="#b4bcc6" stroke-width="0.9"/><rect x="5.1" y="1.4" width="13.6" height="9" fill="#5ab5f7" stroke="#2a8ad6" stroke-width="1"/><path d="M5.6 1.9 L12 1.9 L7 9.9 L5.6 9.9 Z" fill="#86ccfb" opacity="0.7"/></svg>
<span style="left:629.80px;top:541.00px;font-size:15.7px;color:#000;transform:scaleX(0.8325);">pylon GigE Vision Driver</span>
<svg style="left:586px;top:561px" width="14" height="14" viewBox="0 0 14 14"><rect x="0.5" y="0.5" width="13" height="13" fill="#fff" stroke="#8c8c8c" stroke-width="1.5"/><path d="M2.91 6.89 L5.82 10.12 L11.42 3.45" fill="none" stroke="#000" stroke-width="2.3"/></svg>
<svg style="left:608px;top:559px" width="20" height="20" viewBox="0 0 20 20"><rect x="0.7" y="16.2" width="18.6" height="2.2" fill="#d6d6d6"/>
<rect x="8.6" y="10.8" width="3.8" height="6" fill="#44c24e"/>
<rect x="5.4" y="15.6" width="9.6" height="3" fill="#42c04c"/>
<rect x="6" y="11.2" width="9" height="0.9" fill="#6aa9d8"/><path d="M4.8 0.6 L2.6 0.9 L2.4 2.6 L0.6 2.8 L0.6 5 L2 5.6 L0.4 7.2 L1.6 9 L3 8.8 L3.4 10.8 L5 10.8" fill="#eef1f4" stroke="#b4bcc6" stroke-width="0.9"/><rect x="5.1" y="1.4" width="13.6" height="9" fill="#5ab5f7" stroke="#2a8ad6" stroke-width="1"/><path d="M5.6 1.9 L12 1.9 L7 9.9 L5.6 9.9 Z" fill="#86ccfb" opacity="0.7"/></svg>
<span style="left:629.80px;top:562.00px;font-size:15.7px;color:#000;transform:scaleX(0.8407);">OMRON SENTECH GigE Vision Driver</span>
<svg style="left:586px;top:582px" width="14" height="14" viewBox="0 0 14 14"><rect x="0.5" y="0.5" width="13" height="13" fill="#fff" stroke="#8c8c8c" stroke-width="1.5"/><path d="M2.91 6.89 L5.82 10.12 L11.42 3.45" fill="none" stroke="#000" stroke-width="2.3"/></svg>
<svg style="left:608px;top:580px" width="20" height="20" viewBox="0 0 20 20"><rect x="0.7" y="16.2" width="18.6" height="2.2" fill="#d6d6d6"/>
<rect x="8.6" y="10.8" width="3.8" height="6" fill="#44c24e"/>
<rect x="5.4" y="15.6" width="9.6" height="3" fill="#42c04c"/>
<rect x="6" y="11.2" width="9" height="0.9" fill="#6aa9d8"/><path d="M4.8 0.6 L2.6 0.9 L2.4 2.6 L0.6 2.8 L0.6 5 L2 5.6 L0.4 7.2 L1.6 9 L3 8.8 L3.4 10.8 L5 10.8" fill="#eef1f4" stroke="#b4bcc6" stroke-width="0.9"/><rect x="5.1" y="1.4" width="13.6" height="9" fill="#5ab5f7" stroke="#2a8ad6" stroke-width="1"/><path d="M5.6 1.9 L12 1.9 L7 9.9 L5.6 9.9 Z" fill="#86ccfb" opacity="0.7"/></svg>
<span style="left:629.80px;top:583.00px;font-size:15.7px;color:#000;transform:scaleX(0.8613);">QoS Packet Scheduler</span>
<div style="left:627px;top:601px;width:238px;height:21px;background:#f0f0f0"></div>
<svg style="left:586px;top:603px" width="14" height="14" viewBox="0 0 14 14"><rect x="0.5" y="0.5" width="13" height="13" fill="#fff" stroke="#8c8c8c" stroke-width="1.5"/><path d="M2.91 6.89 L5.82 10.12 L11.42 3.45" fill="none" stroke="#000" stroke-width="2.3"/></svg>
<svg style="left:608px;top:610.4px" width="19" height="11" viewBox="0 0 19 11"><rect x="7.1" y="0.6" width="4.9" height="7.6" fill="#1f9a8c"/>
<rect x="7.1" y="0.2" width="4.9" height="1.2" fill="#5b9bdc" opacity="0.8"/>
<rect x="0.7" y="7.3" width="17.4" height="3.6" fill="#1f9a8c"/>
<rect x="0.7" y="7.3" width="1.6" height="3.6" fill="#5b9bdc"/><rect x="16.5" y="7.3" width="1.6" height="3.6" fill="#5b9bdc"/></svg>
<span style="left:629.80px;top:605.00px;font-size:15.7px;color:#000;transform:scaleX(0.8538);">Internet Protocol Version 4 (TCP/IPv4)</span>
<svg style="left:586px;top:624px" width="14" height="14" viewBox="0 0 14 14"><rect x="0.5" y="0.5" width="13" height="13" fill="#fff" stroke="#8c8c8c" stroke-width="1.5"/></svg>
<svg style="left:608px;top:632.4px" width="19" height="11" viewBox="0 0 19 11"><rect x="7.1" y="0.6" width="4.9" height="7.6" fill="#41c045"/>
<rect x="7.1" y="0.2" width="4.9" height="1.2" fill="#c8c8c8" opacity="0.8"/>
<rect x="0.7" y="7.3" width="17.4" height="3.6" fill="#41c045"/>
<rect x="0.7" y="7.3" width="1.6" height="3.6" fill="#c8c8c8"/><rect x="16.5" y="7.3" width="1.6" height="3.6" fill="#c8c8c8"/></svg>
<span style="left:629.80px;top:626.00px;font-size:15.7px;color:#000;transform:scaleX(0.8452);">Microsoft Network Adapter Multiplexor Protocol</span>
<div style="left:954px;top:493px;width:21px;height:173px;background:#f0f0f0"></div>
<div style="left:954px;top:516px;width:18px;height:53px;background:#c1c1c1"></div>
<svg style="left:958px;top:502px" width="10" height="7" viewBox="0 0 10 7"><path d="M1 5.5 L5 1.5 L9 5.5" fill="none" stroke="#505050" stroke-width="2.1"/></svg>
<svg style="left:958px;top:629px" width="10" height="7" viewBox="0 0 10 7"><path d="M1 1.5 L5 5.5 L9 1.5" fill="none" stroke="#505050" stroke-width="2.1"/></svg>
<div style="left:577px;top:645px;width:398px;height:21px;background:#f0f0f0"></div>
<div style="left:600px;top:645px;width:314px;height:18px;background:#c1c1c1"></div>
<svg style="left:585px;top:649px" width="7" height="10" viewBox="0 0 7 10"><path d="M5.5 1 L1.5 5 L5.5 9" fill="none" stroke="#505050" stroke-width="2.1"/></svg>
<svg style="left:938px;top:649px" width="7" height="10" viewBox="0 0 7 10"><path d="M1.5 1 L5.5 5 L1.5 9" fill="none" stroke="#505050" stroke-width="2.1"/></svg>
<div style="left:578px;top:677px;width:123px;height:26px;background:#cccccc;border:1px solid #bfbfbf"></div>
<span style="left:615.70px;top:683.00px;font-size:15.7px;color:#838383;transform:scaleX(0.8287);">Install...</span>
<div style="left:714px;top:677px;width:123px;height:26px;background:#cccccc;border:1px solid #bfbfbf"></div>
<span style="left:749.70px;top:683.00px;font-size:15.7px;color:#838383;transform:scaleX(0.8177);">Uninstall</span>
<div style="left:851px;top:677px;width:124px;height:26px;background:#cccccc;border:1px solid #bfbfbf"></div>
<span style="left:883.10px;top:683.00px;font-size:15.7px;color:#838383;transform:scaleX(0.8182);">Properties</span>
<div style="left:576px;top:717px;width:400px;height:76px;border:1px solid #dcdcdc;background:#fff"></div>
<div style="left:584px;top:712px;width:72px;height:12px;background:#fff"></div>
<span style="left:587.30px;top:710.00px;font-size:15.7px;color:#000;transform:scaleX(0.8347);">Description</span>
<span style="left:591.90px;top:733.00px;font-size:15.7px;color:#000;transform:scaleX(0.8458);">Transmission Control Protocol/Internet Protocol. The default</span>
<span style="left:591.90px;top:749.00px;font-size:15.7px;color:#000;transform:scaleX(0.8482);">wide area network protocol that provides communication</span>
<span style="left:591.90px;top:765.00px;font-size:15.7px;color:#000;transform:scaleX(0.8521);">across diverse interconnected networks.</span>
<div style="left:800px;top:831px;width:91px;height:26px;background:#cccccc;border:1px solid #bfbfbf"></div>
<span style="left:835.00px;top:837.00px;font-size:15.7px;color:#838383;transform:scaleX(0.8866);">OK</span>
<div style="left:901px;top:831px;width:91px;height:26px;background:#cccccc;border:1px solid #bfbfbf"></div>
<span style="left:924.50px;top:837.00px;font-size:15.7px;color:#838383;transform:scaleX(0.8681);">Cancel</span>
<div style="left:1047px;top:283px;width:500px;height:569px;background:#f0f0f0;border:1px solid #a9a9a9;box-shadow:inset 0 0 0 1px #f6f6f6"></div>
<div style="left:1048px;top:284px;width:498px;height:38px;background:#fff"></div>
<span style="left:1058.00px;top:295.00px;font-size:16px;color:#999;transform:scaleX(0.9071);">Internet Protocol Version 4 (TCP/IPv4) Properties</span>
<svg style="left:1519px;top:297px" width="12" height="12" viewBox="0 0 12 12"><path d="M0.3 0.3 L11.7 11.7 M11.7 0.3 L0.3 11.7" stroke="#858585" stroke-width="1" fill="none"/></svg>
<div style="left:1056px;top:356px;width:480px;height:449px;background:#fff;border:1px solid #d9d9d9"></div>
<div style="left:1056px;top:331px;width:66px;height:26px;background:#fff;border:1px solid #d9d9d9;border-bottom:none"></div>
<span style="left:1064.80px;top:336.00px;font-size:14px;color:#000;transform:scaleX(0.9335);">General</span>
<span style="left:1073.30px;top:374.00px;font-size:14px;color:#000;transform:scaleX(0.9751);">You can get IP settings assigned automatically if your network supports</span>
<span style="left:1073.30px;top:390.00px;font-size:14px;color:#000;transform:scaleX(0.9847);">this capability. Otherwise, you need to ask your network administrator</span>
<span style="left:1073.30px;top:406.00px;font-size:14px;color:#000;transform:scaleX(0.9989);">for the appropriate IP settings.</span>
<div style="left:1074px;top:483px;width:447px;height:118px;border:1px solid #dedede"></div>
<div style="left:1086px;top:476px;width:197px;height:16px;background:#fff"></div>
<div style="left:1074px;top:652px;width:447px;height:85px;border:1px solid #dedede"></div>
<div style="left:1086px;top:645px;width:266px;height:16px;background:#fff"></div>
<svg style="left:1084.6px;top:448.5px" width="18" height="18" viewBox="0 0 18 18"><circle cx="9" cy="9" r="7.7" fill="#fff" stroke="#444" stroke-width="1.25"/></svg>
<span style="left:1104.50px;top:450.00px;font-size:14px;color:#000;transform:scaleX(0.9646);">Obtain an IP address automatically</span>
<svg style="left:1084.6px;top:474.9px" width="18" height="18" viewBox="0 0 18 18"><circle cx="9" cy="9" r="7.7" fill="#fff" stroke="#444" stroke-width="1.25"/><circle cx="9" cy="9" r="4.3" fill="#333"/></svg>
<span style="left:1104.50px;top:476.00px;font-size:14px;color:#000;transform:scaleX(0.9681);">Use the following IP address:</span>
<span style="left:1089.20px;top:506.00px;font-size:14px;color:#000;transform:scaleX(0.9764);">IP address:</span>
<div style="left:1308px;top:501px;width:157px;height:25px;background:#fff;border:1px solid #7a7a7a"></div>
<span style="left:1348.15px;top:507.00px;font-size:14px;color:#000;transform:scaleX(1.0000);">.</span>
<span style="left:1386.15px;top:507.00px;font-size:14px;color:#000;transform:scaleX(1.0000);">.</span>
<span style="left:1423.35px;top:507.00px;font-size:14px;color:#000;transform:scaleX(1.0000);">.</span>
<span style="left:1319.70px;top:507.00px;font-size:14px;color:#000;transform:scaleX(0.9461);">192</span>
<span style="left:1357.00px;top:507.00px;font-size:14px;color:#000;transform:scaleX(0.9461);">168</span>
<span style="left:1394.30px;top:507.00px;font-size:14px;color:#000;transform:scaleX(0.9461);">250</span>
<span style="left:1439.15px;top:507.00px;font-size:14px;color:#000;transform:scaleX(1.0000);">3</span>
<span style="left:1089.20px;top:539.00px;font-size:14px;color:#000;transform:scaleX(0.9508);">Subnet mask:</span>
<div style="left:1308px;top:533px;width:157px;height:25px;background:#fff;border:1px solid #7a7a7a"></div>
<span style="left:1348.15px;top:539.00px;font-size:14px;color:#000;transform:scaleX(1.0000);">.</span>
<span style="left:1386.15px;top:539.00px;font-size:14px;color:#000;transform:scaleX(1.0000);">.</span>
<span style="left:1423.35px;top:539.00px;font-size:14px;color:#000;transform:scaleX(1.0000);">.</span>
<span style="left:1319.70px;top:539.00px;font-size:14px;color:#000;transform:scaleX(0.9461);">255</span>
<span style="left:1357.00px;top:539.00px;font-size:14px;color:#000;transform:scaleX(0.9461);">255</span>
<span style="left:1394.30px;top:539.00px;font-size:14px;color:#000;transform:scaleX(0.9461);">255</span>
<span style="left:1439.15px;top:539.00px;font-size:14px;color:#000;transform:scaleX(1.0000);">0</span>
<span style="left:1089.20px;top:571.00px;font-size:14px;color:#000;transform:scaleX(1.0077);">Default gateway:</span>
<div style="left:1308px;top:566px;width:157px;height:25px;background:#fff;border:1px solid #7a7a7a"></div>
<span style="left:1348.15px;top:572.00px;font-size:14px;color:#000;transform:scaleX(1.0000);">.</span>
<span style="left:1386.15px;top:572.00px;font-size:14px;color:#000;transform:scaleX(1.0000);">.</span>
<span style="left:1423.35px;top:572.00px;font-size:14px;color:#000;transform:scaleX(1.0000);">.</span>
<svg style="left:1084.6px;top:616px" width="18" height="18" viewBox="0 0 18 18"><circle cx="9" cy="9" r="7.7" fill="#fff" stroke="#c4c4c4" stroke-width="1.25"/></svg>
<span style="left:1104.50px;top:617.00px;font-size:14px;color:#838383;transform:scaleX(0.9572);">Obtain DNS server address automatically</span>
<svg style="left:1084.6px;top:643.8px" width="18" height="18" viewBox="0 0 18 18"><circle cx="9" cy="9" r="7.7" fill="#fff" stroke="#444" stroke-width="1.25"/><circle cx="9" cy="9" r="4.3" fill="#333"/></svg>
<span style="left:1104.50px;top:646.00px;font-size:14px;color:#000;transform:scaleX(0.9564);">Use the following DNS server addresses:</span>
<span style="left:1089.20px;top:675.00px;font-size:14px;color:#000;transform:scaleX(0.9669);">Preferred DNS server:</span>
<div style="left:1308px;top:669.8px;width:157px;height:25px;background:#fff;border:1px solid #7a7a7a"></div>
<span style="left:1348.15px;top:675.00px;font-size:14px;color:#000;transform:scaleX(1.0000);">.</span>
<span style="left:1386.15px;top:675.00px;font-size:14px;color:#000;transform:scaleX(1.0000);">.</span>
<span style="left:1423.35px;top:675.00px;font-size:14px;color:#000;transform:scaleX(1.0000);">.</span>
<span style="left:1089.20px;top:708.00px;font-size:14px;color:#000;transform:scaleX(0.9760);">Alternate DNS server:</span>
<div style="left:1308px;top:702.4px;width:157px;height:25px;background:#fff;border:1px solid #7a7a7a"></div>
<span style="left:1348.15px;top:708.00px;font-size:14px;color:#000;transform:scaleX(1.0000);">.</span>
<span style="left:1386.15px;top:708.00px;font-size:14px;color:#000;transform:scaleX(1.0000);">.</span>
<span style="left:1423.35px;top:708.00px;font-size:14px;color:#000;transform:scaleX(1.0000);">.</span>
<svg style="left:1090px;top:758.5px" width="16" height="16" viewBox="0 0 16 16"><rect x="0.5" y="0.5" width="15" height="15" fill="#fff" stroke="#333" stroke-width="1"/></svg>
<span style="left:1109.60px;top:760.00px;font-size:14px;color:#000;transform:scaleX(0.9833);">Validate settings upon exit</span>
<div style="left:1410px;top:760px;width:110px;height:26px;background:#e1e1e1;border:1px solid #adadad"></div>
<span style="left:1425.80px;top:766.00px;font-size:14px;color:#000;transform:scaleX(1.0184);">Advanced...</span>
<div style="left:1345px;top:815px;width:91px;height:26px;background:#e1e1e1;border:1px solid #adadad"></div>
<span style="left:1380.40px;top:821.00px;font-size:14px;color:#000;transform:scaleX(0.8896);">OK</span>
<div style="left:1446px;top:815px;width:91px;height:26px;background:#e1e1e1;border:1px solid #adadad"></div>
<span style="left:1469.90px;top:821.00px;font-size:14px;color:#000;transform:scaleX(0.9267);">Cancel</span>
<div style="left:0px;top:0px;width:1596px;height:988px;border:1px solid #2b4b55;border-right-color:#1f5666;border-bottom-color:#1c5262;pointer-events:none"></div>
</body></html>
